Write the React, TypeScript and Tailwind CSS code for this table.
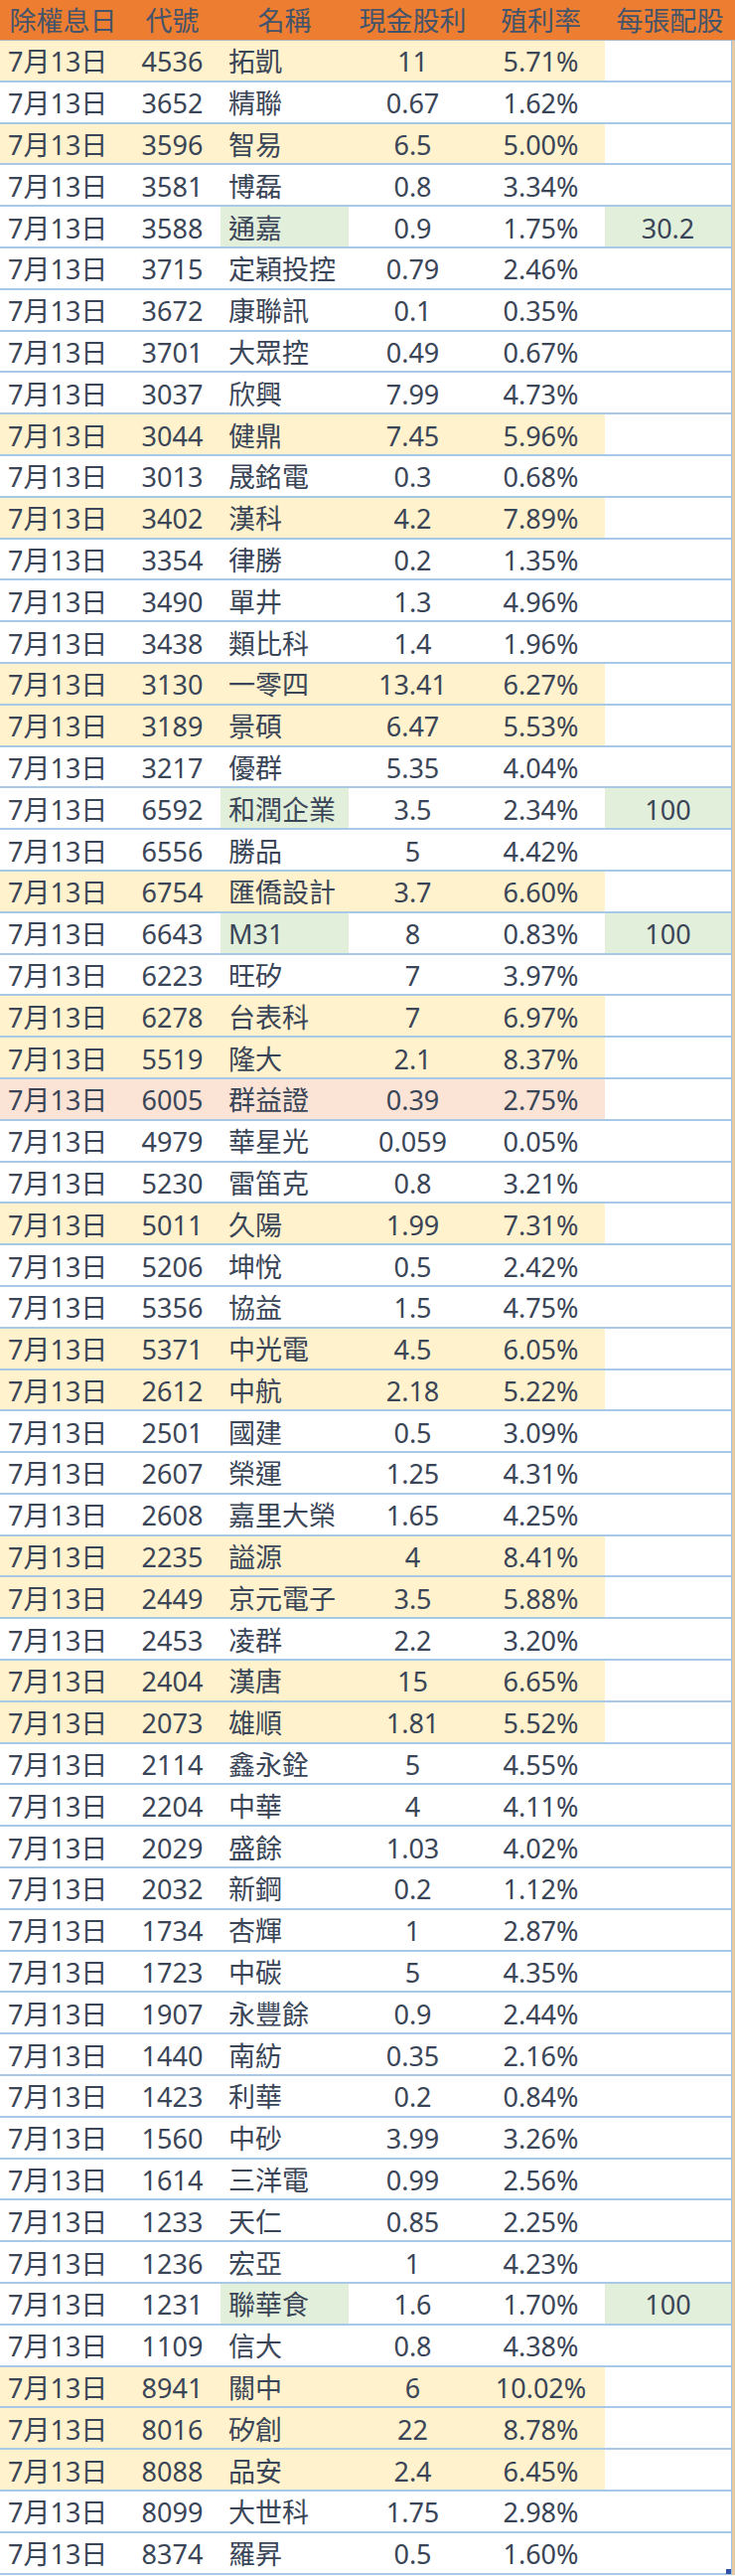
import React from "react";

type Row = [string, string, string, string, string?, string?];
// [code, name, cash, yield, hl ('y'|'g'|'p'|''), bonus]
const rows: Row[] = [
  ["4536", "拓凱", "11", "5.71%", "y"],
  ["3652", "精聯", "0.67", "1.62%", ""],
  ["3596", "智易", "6.5", "5.00%", "y"],
  ["3581", "博磊", "0.8", "3.34%", ""],
  ["3588", "通嘉", "0.9", "1.75%", "g", "30.2"],
  ["3715", "定穎投控", "0.79", "2.46%", ""],
  ["3672", "康聯訊", "0.1", "0.35%", ""],
  ["3701", "大眾控", "0.49", "0.67%", ""],
  ["3037", "欣興", "7.99", "4.73%", ""],
  ["3044", "健鼎", "7.45", "5.96%", "y"],
  ["3013", "晟銘電", "0.3", "0.68%", ""],
  ["3402", "漢科", "4.2", "7.89%", "y"],
  ["3354", "律勝", "0.2", "1.35%", ""],
  ["3490", "單井", "1.3", "4.96%", ""],
  ["3438", "類比科", "1.4", "1.96%", ""],
  ["3130", "一零四", "13.41", "6.27%", "y"],
  ["3189", "景碩", "6.47", "5.53%", "y"],
  ["3217", "優群", "5.35", "4.04%", ""],
  ["6592", "和潤企業", "3.5", "2.34%", "g", "100"],
  ["6556", "勝品", "5", "4.42%", ""],
  ["6754", "匯僑設計", "3.7", "6.60%", "y"],
  ["6643", "M31", "8", "0.83%", "g", "100"],
  ["6223", "旺矽", "7", "3.97%", ""],
  ["6278", "台表科", "7", "6.97%", "y"],
  ["5519", "隆大", "2.1", "8.37%", "y"],
  ["6005", "群益證", "0.39", "2.75%", "p"],
  ["4979", "華星光", "0.059", "0.05%", ""],
  ["5230", "雷笛克", "0.8", "3.21%", ""],
  ["5011", "久陽", "1.99", "7.31%", "y"],
  ["5206", "坤悅", "0.5", "2.42%", ""],
  ["5356", "協益", "1.5", "4.75%", ""],
  ["5371", "中光電", "4.5", "6.05%", "y"],
  ["2612", "中航", "2.18", "5.22%", "y"],
  ["2501", "國建", "0.5", "3.09%", ""],
  ["2607", "榮運", "1.25", "4.31%", ""],
  ["2608", "嘉里大榮", "1.65", "4.25%", ""],
  ["2235", "謚源", "4", "8.41%", "y"],
  ["2449", "京元電子", "3.5", "5.88%", "y"],
  ["2453", "凌群", "2.2", "3.20%", ""],
  ["2404", "漢唐", "15", "6.65%", "y"],
  ["2073", "雄順", "1.81", "5.52%", "y"],
  ["2114", "鑫永銓", "5", "4.55%", ""],
  ["2204", "中華", "4", "4.11%", ""],
  ["2029", "盛餘", "1.03", "4.02%", ""],
  ["2032", "新鋼", "0.2", "1.12%", ""],
  ["1734", "杏輝", "1", "2.87%", ""],
  ["1723", "中碳", "5", "4.35%", ""],
  ["1907", "永豐餘", "0.9", "2.44%", ""],
  ["1440", "南紡", "0.35", "2.16%", ""],
  ["1423", "利華", "0.2", "0.84%", ""],
  ["1560", "中砂", "3.99", "3.26%", ""],
  ["1614", "三洋電", "0.99", "2.56%", ""],
  ["1233", "天仁", "0.85", "2.25%", ""],
  ["1236", "宏亞", "1", "4.23%", ""],
  ["1231", "聯華食", "1.6", "1.70%", "g", "100"],
  ["1109", "信大", "0.8", "4.38%", ""],
  ["8941", "關中", "6", "10.02%", "y"],
  ["8016", "矽創", "22", "8.78%", "y"],
  ["8088", "品安", "2.4", "6.45%", "y"],
  ["8099", "大世科", "1.75", "2.98%", ""],
  ["8374", "羅昇", "0.5", "1.60%", ""],
];

const font = {
  fontFamily: '"Noto Sans", "Noto Sans CJK TC", sans-serif',
};

function DataRow({ r }: { r: Row }) {
  const [code, name, cash, yld, hl, bonus] = r;
  const base =
    hl === "y" ? "bg-[#fff2cc]" : hl === "p" ? "bg-[#fbe3d6]" : "bg-white";
  const nameBg = hl === "g" ? "bg-[#e2efda]" : "";
  const bonusBg = hl === "g" ? "bg-[#e2efda]" : "bg-white";
  return (
    <div className="flex h-[41.8px] border-b-2 border-[#a8c8e8] text-[27px] leading-none text-[#3a4557]">
      <div className={`flex w-[609px] ${base}`}>
        <div className="flex w-[125px] items-center pl-[8px] pt-[2px]">7月13日</div>
        <div className="flex w-[97px] items-center justify-center pt-[2px]">{code}</div>
        <div className={`flex w-[129px] items-center pl-[8px] pt-[2px] ${nameBg}`}>{name}</div>
        <div className="flex w-[129px] items-center justify-center pt-[2px]">{cash}</div>
        <div className="flex w-[129px] items-center justify-center pt-[2px]">{yld}</div>
      </div>
      <div className={`flex flex-1 items-center justify-center pt-[2px] ${bonusBg}`}>
        {bonus ?? ""}
      </div>
    </div>
  );
}

export default function App() {
  return (
    <div className="w-[740px] bg-white" style={font}>
      <div className="flex h-[41px] border-b border-[#b0b4b8] bg-[#ed7d31] text-[27px] leading-none text-[#44546a]">
        <div className="flex w-[125px] items-center justify-center pl-[2px]">除權息日</div>
        <div className="flex w-[97px] items-center justify-center">代號</div>
        <div className="flex w-[129px] items-center justify-center">名稱</div>
        <div className="flex w-[129px] items-center justify-center">現金股利</div>
        <div className="flex w-[129px] items-center justify-center">殖利率</div>
        <div className="flex flex-1 items-center justify-center">每張配股</div>
      </div>
      <div className="relative border-r-[3px] border-[#e6c9a3]">
        <div className="border-r border-[#9dc3e6]">
          {rows.map((r, i) => (
            <DataRow key={i} r={r} />
          ))}
        </div>
        <div className="absolute bottom-[1px] right-[1px] h-[5px] w-[5px] bg-[#2f4fa8]" />
      </div>
    </div>
  );
}
